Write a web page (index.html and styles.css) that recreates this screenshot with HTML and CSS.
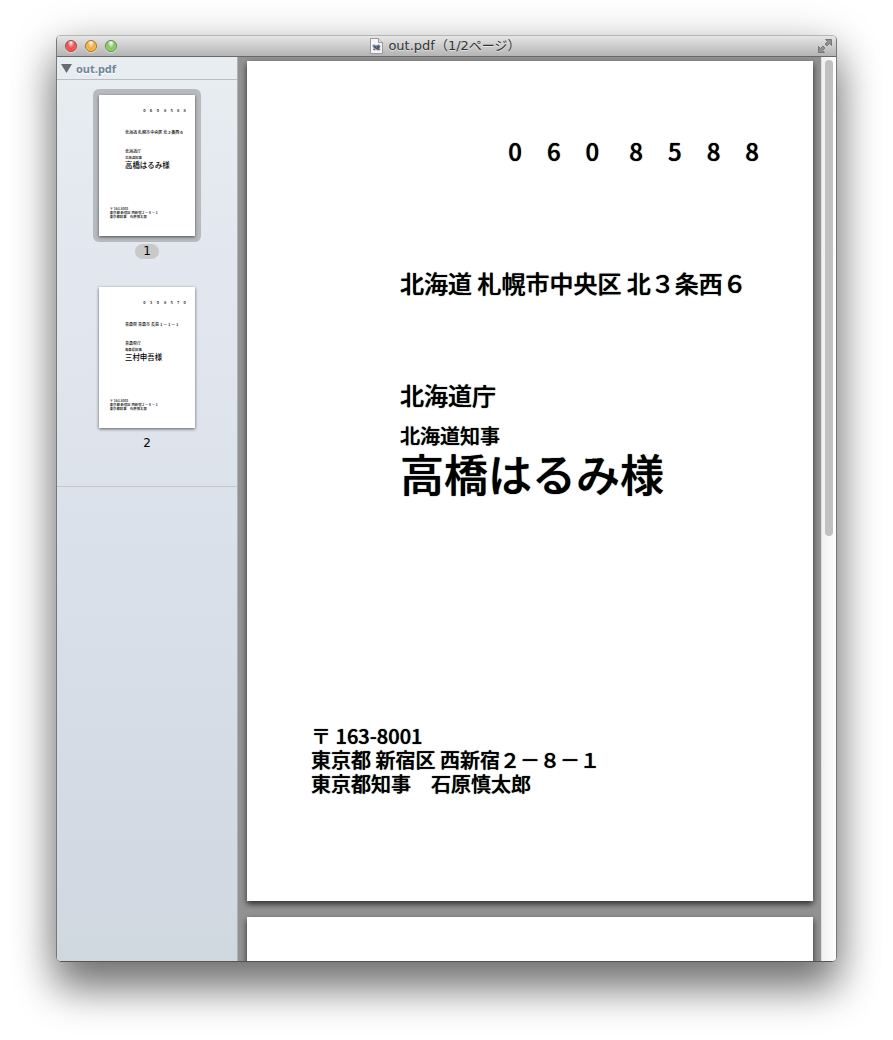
FILE: index.html
```
<!DOCTYPE html>
<html lang="ja">
<head>
  <meta charset="UTF-8">
  <title>out.pdf</title>
  <link rel="stylesheet" href="styles.css">
</head>
<body>

<div class="window">
  <header class="titlebar">
    <div class="lights">
      <button class="light close" aria-label="閉じる"></button>
      <button class="light minimize" aria-label="しまう"></button>
      <button class="light zoom" aria-label="拡大"></button>
    </div>
    <h1 class="title">
      <svg class="doc-icon" width="13" height="16" viewBox="0 0 13 16" aria-hidden="true">
        <path d="M.5.5h8l4 4v11H.5z" fill="#f6f6f6" stroke="#999"/>
        <path d="M8.500.5v4h4" fill="#ddd" stroke="#999"/>
        <path d="M2 7l2-1 2 1 3-1 2 2-1 2 1 2-3 1-2-1-2 1-1-3z" fill="#b3bdce"/>
        <path d="M3 7l3 1 3-1 1 2-2 3-2-1-2-1z" fill="#46597f"/>
        <path d="M6 8h1v2H6zM8 11h2v1H8zM3 11h2v1H3z" fill="#8c6a58"/>
      </svg>
      <span>out.pdf（1/2ページ）</span>
    </h1>
    <button class="fullscreen" aria-label="フルスクリーン">
      <svg width="14" height="14" viewBox="0 0 14 14" aria-hidden="true">
        <path d="M7.500.5h6v6l-2-2-2.500 2.500L7 5l2.500-2.500z" fill="#909090" stroke="#777"/>
        <path d="M6.500 13.500h-6v-6l2 2L5 7l2 2-2.500 2.500z" fill="#909090" stroke="#777"/>
      </svg>
    </button>
  </header>

  <div class="content">
    <aside class="sidebar">
      <button class="section">
        <svg width="11" height="9" viewBox="0 0 11 9" aria-hidden="true"><path d="M0 0h11L5.500 9z" fill="#666b70"/></svg>
        <span>out.pdf</span>
      </button>
      <div class="thumbs">
        <div class="thumb selected">
          <button class="thumb-button" aria-labelledby="label-1">
            <svg class="thumb-page" viewBox="0 2 566 832">
              <g font-size="24">
                <text x="261" y="102">0</text><text x="300" y="102">6</text><text x="340" y="102">0</text>
                <text x="384" y="102">8</text><text x="422" y="102">5</text><text x="460" y="102">8</text><text x="498" y="102">8</text>
                <text x="153" y="232">北海道 札幌市中央区 北３条西６</text>
                <text x="153" y="344">北海道庁</text>
              </g>
              <text x="153" y="382" font-size="20">北海道知事</text>
              <text x="153" y="430" font-size="44">高橋はるみ様</text>
              <g font-size="20">
                <text x="63" y="680">〒 163-8001</text>
                <text x="63" y="704">東京都 新宿区 西新宿２－８－１</text>
                <text x="63" y="728">東京都知事　石原慎太郎</text>
              </g>
            </svg>
          </button>
          <span class="thumb-label" id="label-1">1</span>
        </div>
        <div class="thumb">
          <button class="thumb-button" aria-labelledby="label-2">
            <svg class="thumb-page" viewBox="0 2 566 832">
              <g font-size="24">
                <text x="261" y="102">0</text><text x="300" y="102">3</text><text x="340" y="102">0</text>
                <text x="384" y="102">8</text><text x="422" y="102">5</text><text x="460" y="102">7</text><text x="498" y="102">0</text>
                <text x="153" y="232">青森県 青森市 長島１－１－１</text>
                <text x="153" y="344">青森県庁</text>
              </g>
              <text x="153" y="382" font-size="20">青森県知事</text>
              <text x="153" y="430" font-size="44">三村申吾様</text>
              <g font-size="20">
                <text x="63" y="680">〒 163-8001</text>
                <text x="63" y="704">東京都 新宿区 西新宿２－８－１</text>
                <text x="63" y="728">東京都知事　石原慎太郎</text>
              </g>
            </svg>
          </button>
          <span class="thumb-label" id="label-2">2</span>
        </div>
      </div>
    </aside>

    <main class="viewer">
      <article class="page">
        <div class="postcode">
          <div class="digits area"><span>0</span><span>6</span><span>0</span></div>
          <div class="digits"><span>8</span><span>5</span><span>8</span><span>8</span></div>
        </div>
        <div class="recipient">
          <p class="address">北海道 札幌市中央区 北３条西６</p>
          <p class="office">北海道庁</p>
          <p class="post">北海道知事</p>
          <p class="name">高橋はるみ様</p>
        </div>
        <div class="sender">
          <p>〒 163-8001</p>
          <p>東京都 新宿区 西新宿２－８－１</p>
          <p>東京都知事　石原慎太郎</p>
        </div>
      </article>
      <article class="page"></article>
    </main>

    <div class="scrollbar">
      <div class="scroll-thumb"></div>
    </div>
  </div>
</div>

</body>
</html>
```
FILE: styles.css
```
* {
  box-sizing: border-box;
}

body {
  margin: 0;
  height: 100vh;
  padding: 35px 56px 78px;
  display: flex;
  background: #fff;
  color: #000;
  font-family: "DejaVu Sans", "Noto Sans CJK JP", sans-serif;
}

button {
  border: none;
  padding: 0;
  background: none;
  font: inherit;
}

p, h1 {
  margin: 0;
}

.window {
  flex: 1;
  min-width: 0;
  display: flex;
  flex-direction: column;
  border: 1px solid #777;
  border-top-color: #b5b5b5;
  border-bottom-color: #555;
  border-radius: 5px;
  overflow: hidden;
  box-shadow: 0 28px 40px rgba(0, 0, 0, 0.45), 0 8px 44px rgba(0, 0, 0, 0.25);
}

/* Title bar */
.titlebar {
  height: 21px;
  flex: none;
  display: grid;
  grid-template-columns: 1fr auto 1fr;
  align-items: center;
  padding: 0 4px 0 8px;
  background: linear-gradient(#e6e6e6, #b4b4b4);
  border-bottom: 1px solid #686868;
}

.lights {
  display: flex;
  gap: 8px;
}

.light {
  width: 12px;
  height: 12px;
  border-radius: 50%;
  box-shadow: 0 1px 0 rgba(255, 255, 255, 0.5);
}

.close {
  border: 1px solid #a04340;
  background: radial-gradient(ellipse at 50% 15%, #fff 0, #f7a9a5 20%, #ec4b4b 50%, #f98b87 100%);
}

.minimize {
  border: 1px solid #a5702c;
  background: radial-gradient(ellipse at 50% 15%, #fff 0, #fbdc9c 20%, #f0a83a 50%, #fde38a 100%);
}

.zoom {
  border: 1px solid #5d8a45;
  background: radial-gradient(ellipse at 50% 15%, #fff 0, #cdeab8 20%, #83c35e 50%, #c3ee9f 100%);
}

.title {
  display: flex;
  align-items: center;
  gap: 5px;
  padding-right: 6px;
  font-size: 13px;
  line-height: 20px;
  font-weight: 400;
  color: #333;
  text-shadow: 0 1px 0 rgba(255, 255, 255, 0.5);
}

.fullscreen {
  justify-self: end;
  display: flex;
}

.content {
  flex: 1;
  min-height: 0;
  display: flex;
}

/* Sidebar */
.sidebar {
  width: 181px;
  flex: none;
  border-right: 1px solid #b0b3b6;
  background: linear-gradient(#e8edf1, #e3e8f0 20%, #d2d9e3 90%, #d0d8df);
}

.section {
  width: 100%;
  height: 23px;
  display: flex;
  align-items: center;
  gap: 4px;
  padding: 0 4px;
  border-bottom: 1px solid #b9bec1;
  font-family: "Noto Sans", sans-serif;
  font-size: 11px;
  font-weight: 700;
  color: #71859a;
  text-shadow: 0 1px 0 #fff;
}

.thumbs {
  display: flex;
  flex-direction: column;
  gap: 22px;
  padding: 9px 0 35px;
  border-bottom: 1px solid #c3c7ca;
}

.thumb {
  display: flex;
  flex-direction: column;
  align-items: center;
  gap: 2px;
}

.thumb-button {
  display: flex;
  padding: 6px;
  border-radius: 6px;
}

.selected .thumb-button {
  background: #b7bbc0;
}

.thumb-page {
  width: 96px;
  height: 141px;
  background: #fff;
  box-shadow: 0 1px 3px rgba(0, 0, 0, 0.6);
  font-family: "Noto Sans CJK JP", sans-serif;
  font-weight: 500;
}

.thumb-label {
  padding: 0 8px;
  border-radius: 8px;
  font-size: 12px;
  line-height: 15px;
}

.selected .thumb-label {
  background: #c9c9ca;
}

/* Document pages */
.viewer {
  flex: 1;
  min-width: 0;
  display: flex;
  flex-direction: column;
  gap: 16px;
  padding: 4px 8px 0 9px;
  overflow: hidden;
  background: #929292;
}

.page {
  flex: none;
  width: 100%;
  min-height: 840px;
  display: flex;
  flex-direction: column;
  padding: 78px 54px 105px 64px;
  background: #fff;
  box-shadow: 0 3px 6px rgba(0, 0, 0, 0.7);
  font-family: "Noto Sans CJK JP", sans-serif;
  font-weight: 500;
  text-shadow: 0 0 1px #000;
}

.postcode {
  display: flex;
  justify-content: flex-end;
  gap: 30px;
  font-size: 24px;
  line-height: 24px;
}

.digits {
  display: flex;
  gap: 25px;
}

.recipient {
  margin: 102px 0 0 89px;
}

.address, .office {
  font-size: 24px;
  line-height: 36px;
}

.office {
  margin: 76px 0 10px;
}

.post {
  font-size: 20px;
  line-height: 26px;
}

.name {
  font-size: 44px;
  line-height: 48px;
}

.sender {
  margin-top: auto;
  font-size: 20px;
  line-height: 24px;
}

/* Scrollbar */
.scrollbar {
  width: 15px;
  flex: none;
  padding: 3px;
  border-left: 1px solid #e0e0e0;
  background: linear-gradient(90deg, #f0f0f0, #fff);
}

.scroll-thumb {
  width: 8px;
  height: 53%;
  border-radius: 4px;
  background: #c1c1c1;
}
```
